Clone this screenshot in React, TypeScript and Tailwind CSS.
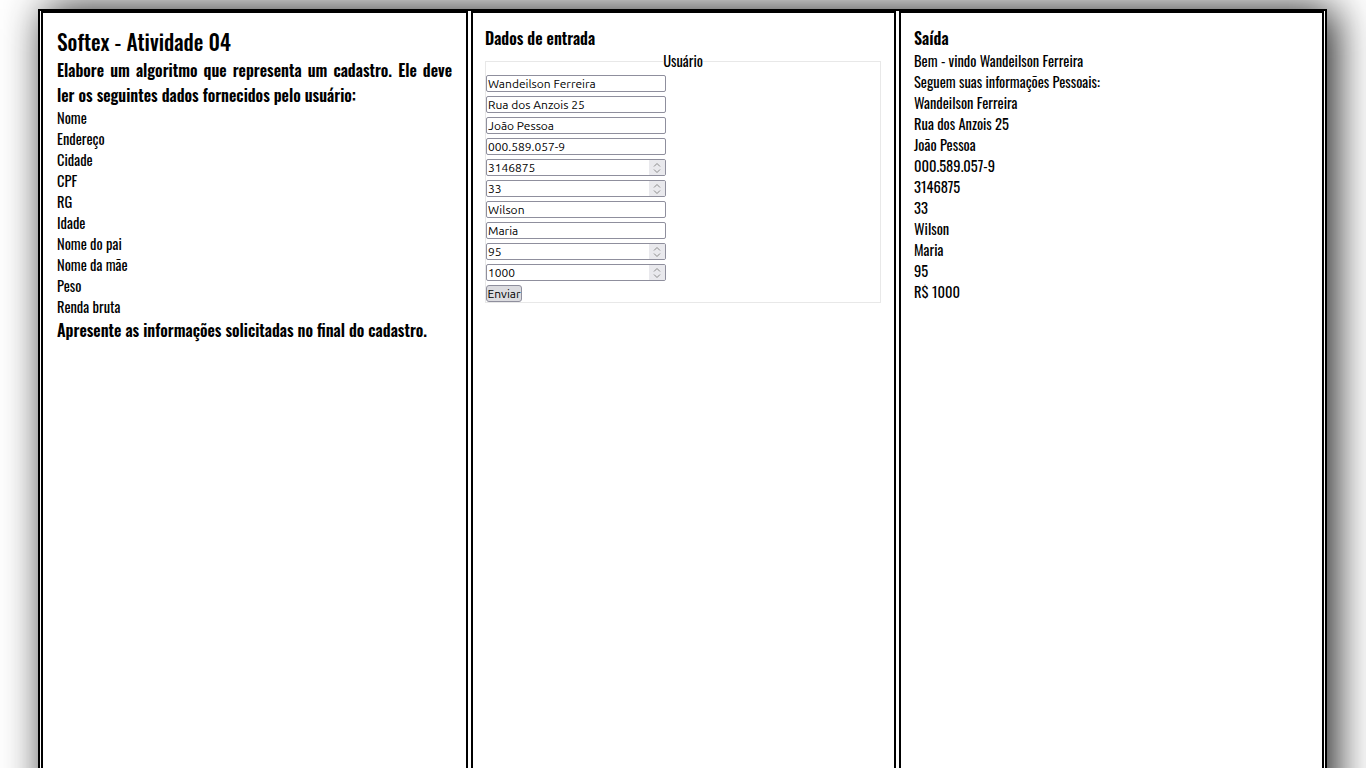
import React from 'react';

const requisitos = ['Nome', 'Endereço', 'Cidade', 'CPF', 'RG', 'Idade', 'Nome do pai', 'Nome da mãe', 'Peso', 'Renda bruta'];

const campos = [
  { valor: 'Wandeilson Ferreira', numero: false },
  { valor: 'Rua dos Anzois 25', numero: false },
  { valor: 'João Pessoa', numero: false },
  { valor: '000.589.057-9', numero: false },
  { valor: '3146875', numero: true },
  { valor: '33', numero: true },
  { valor: 'Wilson', numero: false },
  { valor: 'Maria', numero: false },
  { valor: '95', numero: true },
  { valor: '1000', numero: true },
];

const saida = [
  'Bem - vindo Wandeilson Ferreira',
  'Seguem suas informações Pessoais:',
  'Wandeilson Ferreira',
  'Rua dos Anzois 25',
  'João Pessoa',
  '000.589.057-9',
  '3146875',
  '33',
  'Wilson',
  'Maria',
  '95',
  'R$ 1000',
];

const Spinner = () => (
  <div className="w-[16px] h-full bg-[#e9e9ed] flex flex-col items-center justify-center gap-[2px]">
    <svg width="8" height="5" viewBox="0 0 8 5" fill="none" stroke="#8a8a8a" strokeWidth="1">
      <path d="M1 4.5 L4 1.5 L7 4.5" />
    </svg>
    <svg width="8" height="5" viewBox="0 0 8 5" fill="none" stroke="#8a8a8a" strokeWidth="1">
      <path d="M1 0.5 L4 3.5 L7 0.5" />
    </svg>
  </div>
);

const Campo = ({ valor, numero }: { valor: string; numero: boolean }) => (
  <div className="w-[180px] h-[17px] border border-[#8f8f9d] rounded-[2px] flex items-stretch overflow-hidden bg-white">
    <input
      readOnly
      value={valor}
      className="flex-1 min-w-0 px-[1px] text-[12px] leading-[15px] text-black outline-none font-['Ubuntu','Liberation_Sans',sans-serif]"
    />
    {numero && <Spinner />}
  </div>
);

export default function App() {
  return (
    <div className="h-[768px] overflow-hidden bg-white font-['Oswald','Roboto_Condensed','Liberation_Sans',sans-serif] text-black">
      <main className="ml-[38px] mt-[9px] w-[1289px] border-2 border-black bg-white px-[1px] flex gap-[3px] shadow-[8px_0_40px_rgba(0,0,0,0.9)]">
        {/* Enunciado */}
        <section className="w-[427px] h-[800px] border-2 border-black px-[14px] pt-[13px]">
          <h1 className="text-[21.5px] leading-[30px] mb-[2px] font-medium">Softex - Atividade 04</h1>
          <p className="text-[16px] leading-[25px] font-semibold text-justify">
            Elabore um algoritmo que representa um cadastro. Ele deve ler os seguintes dados fornecidos pelo usuário:
          </p>
          <ul className="-mt-[1px]">
            {requisitos.map((r) => (
              <li key={r} className="text-[14.5px] leading-[21px]">{r}</li>
            ))}
          </ul>
          <p className="mt-[1px] text-[16px] leading-[25px] font-semibold">Apresente as informações solicitadas no final do cadastro.</p>
        </section>

        {/* Entrada */}
        <section className="w-[425px] h-[800px] border-2 border-black pl-[12px] pr-[13px] pt-[13px]">
          <h2 className="text-[16px] leading-[24px] font-semibold">Dados de entrada</h2>
          <fieldset className="mt-[1px] border border-[#e8e8e8]">
            <legend className="mx-auto text-[14.5px] leading-[20px]">Usuário</legend>
            <div className="flex flex-col gap-[4px] pt-[4px]">
              {campos.map((c, i) => (
                <Campo key={i} valor={c.valor} numero={c.numero} />
              ))}
              <button className="w-[36px] h-[17px] bg-[#dcdce0] border border-[#8f8f9d] rounded-[3px] text-[12px] leading-none text-black font-['Ubuntu','Liberation_Sans',sans-serif]">
                Enviar
              </button>
            </div>
          </fieldset>
        </section>

        {/* Saída */}
        <section className="w-[425px] h-[800px] border-2 border-black pl-[13px] pt-[13px]">
          <h2 className="text-[16px] leading-[24px] font-semibold">Saída</h2>
          {saida.map((s, i) => (
            <p key={i} className="text-[14.5px] leading-[21px]">{s}</p>
          ))}
        </section>
      </main>
    </div>
  );
}
